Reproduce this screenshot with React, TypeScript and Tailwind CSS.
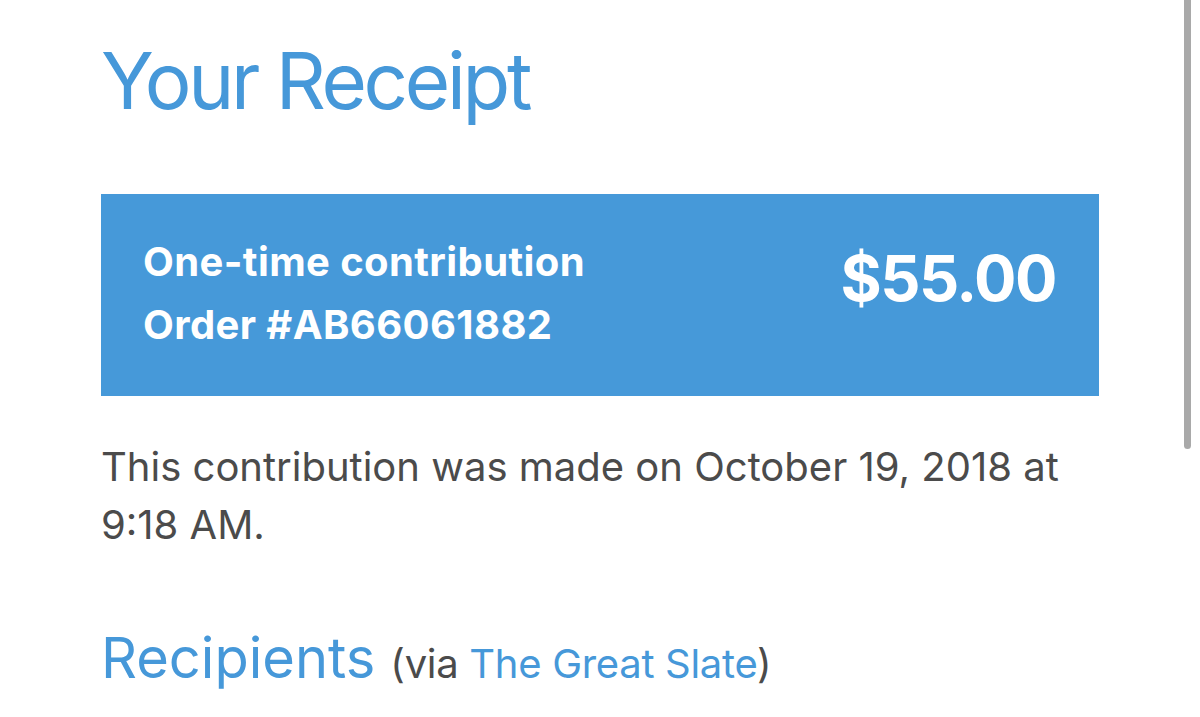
import React from "react";

export default function App() {
  return (
    <div className="relative w-[1200px] h-[717px] overflow-hidden bg-white" style={{ fontFamily: "Inter, 'Noto Sans', sans-serif" }}>
      <div className="pl-[101px] w-[1099px]">
        <h1 className="pt-[34px] text-[78px] leading-[94px] text-[#4698d9] font-normal tracking-[-3.3px]">Your Receipt</h1>
        <div className="mt-[66px] h-[202px] bg-[#4699d9] flex items-start justify-between pl-[42px] pr-[43px] pt-[36px]">
          <div className="text-white font-bold text-[40px] leading-[63px] tracking-[0.4px]">
            <div>One-time contribution</div>
            <div>Order #AB66061882</div>
          </div>
          <div className="mt-[8px] text-white font-bold text-[63px] leading-[80px] tracking-[-1.5px]">$55.00</div>
        </div>
        <p className="mt-[42px] text-[40px] leading-[58px] text-[#4b4b4b]">
          This contribution was made on October 19, 2018 at 9:18 AM.
        </p>
        <div className="mt-[69px] flex items-baseline">
          <span className="text-[56px] leading-[70px] text-[#4698d9]">Recipients</span>
          <span className="ml-[15px] text-[40px] leading-[50px] tracking-[-0.3px] text-[#4b4b4b]">
            (via <span className="text-[#4698d9]">The Great Slate</span>)
          </span>
        </div>
      </div>
      <div className="absolute left-[1184px] top-0 w-[7px] h-[449px] rounded-b-full bg-[#a9a9a9]" />
    </div>
  );
}
